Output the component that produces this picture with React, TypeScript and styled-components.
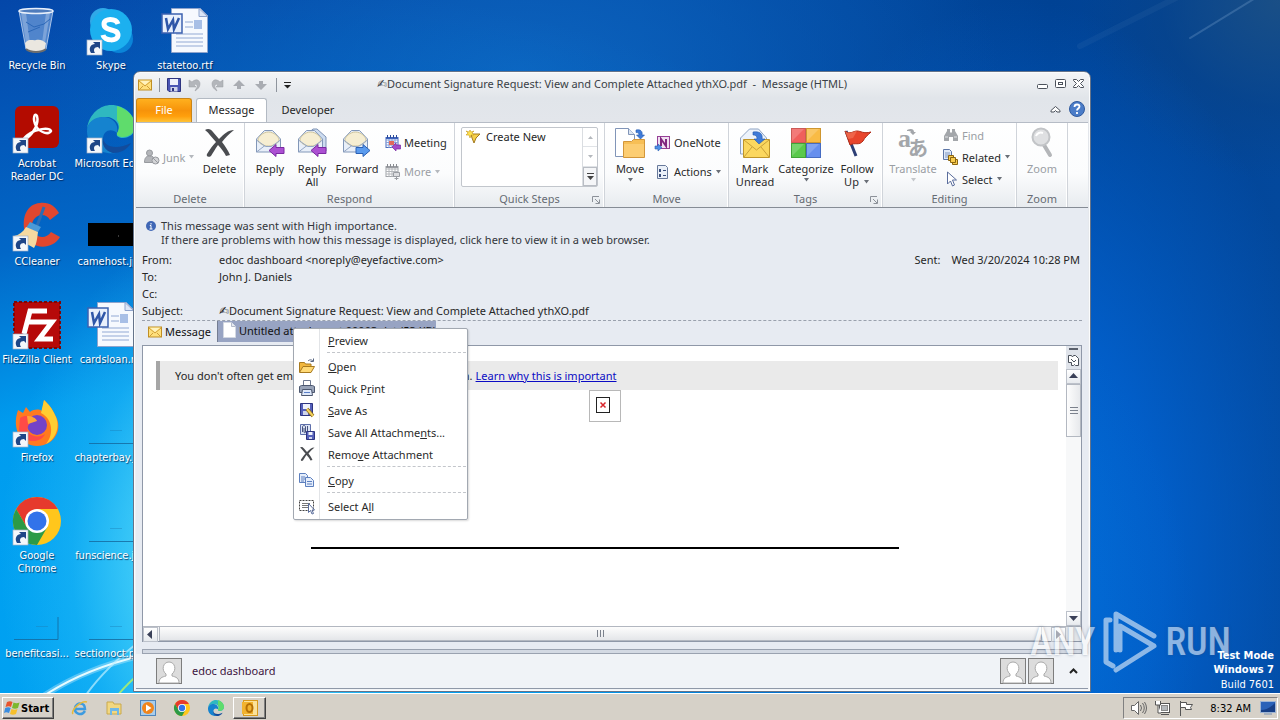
import React from "react";
import styled, { createGlobalStyle, css } from "styled-components";

const GlobalStyle = createGlobalStyle`
  * { box-sizing: border-box; }
  html, body { margin: 0; padding: 0; }
  body {
    font-family: "Noto Sans", "Open Sans", sans-serif;
    font-size: 11px;
    line-height: 13px;
    color: #262626;
    overflow: hidden;
  }
  button { font: inherit; color: inherit; border: 0; padding: 0; margin: 0; background: none; cursor: default; }
  a { cursor: pointer; }
  svg { display: block; flex: none; overflow: visible; }
  dl, dt, dd, p, h1, ul { margin: 0; padding: 0; font: inherit; }
`;

/* ---------- desktop ---------- */

const Screen = styled.div`
  min-height: 100vh;
  display: flex;
  flex-direction: column;
`;

const Desktop = styled.main`
  position: relative;
  flex: 1;
  overflow: hidden;
  background:
    radial-gradient(ellipse 240px 340px at 240px 560px, rgba(120, 235, 255, 0.95) 0%, rgba(90, 220, 250, 0.8) 35%, rgba(50, 195, 248, 0.35) 70%, rgba(20, 160, 240, 0) 100%),
    radial-gradient(ellipse 1000px 660px at 200px 640px, #00a6f4 0%, rgba(0, 160, 242, 0.95) 38%, rgba(0, 125, 220, 0.6) 62%, rgba(0, 90, 190, 0) 100%),
    radial-gradient(ellipse 480px 240px at 520px 70px, rgba(14, 104, 194, 0.8) 0%, rgba(8, 90, 180, 0.5) 60%, rgba(0, 70, 160, 0) 100%),
    radial-gradient(ellipse 320px 560px at 1020px 560px, #026cdc 0%, rgba(2, 98, 208, 0.85) 45%, rgba(0, 70, 160, 0) 100%),
    radial-gradient(ellipse 200px 180px at 1280px 0, #1a4f86 0%, rgba(10, 66, 132, 0.5) 60%, rgba(0, 60, 140, 0) 100%),
    linear-gradient(90deg, #0446a8 0%, #0450ac 50%, #004294 82%, #03489c 100%);
`;

const Scenery = styled.svg`
  position: absolute;
  inset: 0;
  width: 100%;
  height: 100%;
`;

const IconGrid = styled.ul`
  position: relative;
  display: grid;
  grid-template-rows: repeat(7, 98px);
  grid-auto-columns: 74px;
  grid-auto-flow: column;
  justify-content: start;
  list-style: none;
  padding-top: 7px;
`;

const DesktopItem = styled.li<{ $col: number }>`
  grid-column: ${(p) => p.$col};
  display: flex;
  flex-direction: column;
  align-items: center;
  text-align: center;
  gap: 4px;
  color: #fff;
  font-family: "DejaVu Sans Condensed", "DejaVu Sans", sans-serif;
  text-shadow: 1px 1px 1px rgba(0, 20, 60, 0.7);
  white-space: pre;
`;

const BuildNote = styled.div`
  position: absolute;
  right: 6px;
  bottom: 0;
  color: #fff;
  text-align: right;
  font-family: "DejaVu Sans Condensed", "DejaVu Sans", sans-serif;
  line-height: 14px;
  strong { display: block; }
  span { display: block; line-height: 16px; }
`;

const Watermark = styled.div`
  position: absolute;
  right: 49px;
  bottom: 19px;
  display: flex;
  align-items: center;
  gap: 7px;
  color: #fff;
  opacity: 0.55;
  font-family: "Roboto Condensed", "Liberation Sans Narrow", "Liberation Sans", sans-serif;
  font-size: 38px;
  font-weight: 500;
  line-height: 64px;
  text-shadow: 0 0 3px rgba(50, 70, 100, 0.8);
`;

/* ---------- window ---------- */

const MailWindow = styled.section`
  position: absolute;
  left: 133px;
  right: 189px;
  top: 71px;
  bottom: 1px;
  display: flex;
  flex-direction: column;
  border: 1px solid #66748a;
  border-radius: 7px 7px 0 0;
  padding: 0 2px 2px;
  background: linear-gradient(#f4f5f7 0, #e1e5ea 26px, #e3e6eb 50px, #f2f4f7 100%);
  box-shadow: inset 0 0 0 1px #fbfcfd;
`;

const TitleBar = styled.header`
  display: flex;
  align-items: center;
  height: 26px;
`;

const QuickAccess = styled.div`
  flex: 1;
  display: flex;
  align-items: center;
  gap: 6px;
  padding-left: 2px;
`;

const Title = styled.h1`
  white-space: pre;
  padding-bottom: 3px;
  color: #3a3f46;
`;

const Hand = styled.span`
  font-family: "DejaVu Sans", sans-serif;
  font-size: 12px;
  line-height: 1;
`;

const WindowButtons = styled.div`
  flex: 1;
  display: flex;
  justify-content: flex-end;
  gap: 4px;
  padding: 0 2px 3px 0;
`;

const TabRow = styled.nav`
  display: flex;
  align-items: stretch;
  height: 24px;
  gap: 4px;
`;

const tabBase = css`
  height: 24px;
  padding-bottom: 2px;
  border-radius: 3px 3px 0 0;
  text-align: center;
`;

const FileTab = styled.button`
  ${tabBase}
  width: 56px;
  color: #fff;
  border: 1px solid #c98518;
  border-bottom: 0;
  background: linear-gradient(#ffb01e, #f7930a 50%, #ff9f0c 75%, #ffc337);
`;

const Tab = styled.button<{ $active?: boolean }>`
  ${tabBase}
  width: ${(p) => (p.$active ? 71 : 74)}px;
  ${(p) => p.$active && css`
    background: #fff;
    border: 1px solid #b3bac3;
    border-bottom: 0;
  `}
`;

const TabTools = styled.div`
  margin-left: auto;
  display: flex;
  align-items: center;
  gap: 8px;
  padding: 0 3px 2px 0;
`;

const Ribbon = styled.div`
  display: flex;
  height: 86px;
  border-top: 1px solid #b6bcc6;
  border-bottom: 1px solid #868c95;
  background: linear-gradient(#fff, #fbfcfd 60%, #e8ebef);
`;

const Group = styled.section<{ $w: number }>`
  width: ${(p) => p.$w}px;
  display: flex;
  flex-direction: column;
  border-right: 1px solid #d0d4da;
  box-shadow: inset -1px 0 0 #fff;
`;

const GroupBody = styled.div<{ $pad?: number }>`
  height: 68px;
  display: flex;
  padding: 1px 0 0 ${(p) => p.$pad ?? 4}px;
`;

const GroupLabel = styled.div`
  position: relative;
  line-height: 15px;
  text-align: center;
  color: #666b73;
  svg { position: absolute; right: 4px; top: 5px; }
`;

const BigButton = styled.button<{ $w: number; $off?: boolean }>`
  width: ${(p) => p.$w}px;
  display: flex;
  flex-direction: column;
  align-items: center;
  justify-content: flex-start;
  gap: 3px;
  padding-top: 3px;
  color: ${(p) => (p.$off ? "#9a9ea4" : "#2b2b2b")};
  white-space: pre-line;
  text-align: center;
`;

const WithArrow = styled.span`
  display: inline-flex;
  align-items: center;
  gap: 4px;
`;

const SideColumn = styled.div<{ $gap?: number }>`
  height: 66px;
  display: flex;
  flex-direction: column;
  justify-content: center;
  gap: ${(p) => p.$gap ?? 0}px;
  padding-left: 4px;
`;

const SideButton = styled.button<{ $off?: boolean }>`
  display: flex;
  align-items: center;
  height: 22px;
  gap: 3px;
  color: ${(p) => (p.$off ? "#9a9ea4" : "#2b2b2b")};
  white-space: nowrap;
`;

const Gallery = styled.div`
  width: 137px;
  height: 60px;
  margin-top: 3px;
  display: flex;
  border: 1px solid #c2c6cc;
  border-radius: 2px;
  background: #fff;
`;

const GalleryItem = styled.button`
  flex: 1;
  display: flex;
  align-items: center;
  align-self: flex-start;
  height: 17px;
  gap: 5px;
  padding-left: 4px;
`;

const GalleryScroll = styled.div`
  width: 15px;
  display: grid;
  grid-template-rows: repeat(3, 1fr);
  border-left: 1px solid #dadde1;
  button { display: grid; place-items: center; border-bottom: 1px solid #e0e3e7; color: #b4b8bd; }
  button:last-child { color: #444; border: 1px solid #b9bdc4; background: #f5f6f8; }
`;

/* ---------- message ---------- */

const Message = styled.div`
  flex: 1;
  display: flex;
  flex-direction: column;
  padding: 11px 6px 0;
  min-height: 0;
  background: #e7ebf2;
`;

const InfoBar = styled.div`
  display: flex;
  gap: 5px;
  padding-left: 4px;
  line-height: 14px;
  color: #33363b;
  svg { margin-top: 2px; }
`;

const Fields = styled.dl`
  display: grid;
  grid-template-columns: 77px 1fr auto;
  grid-auto-rows: 17px;
  line-height: 17px;
  margin-top: 4px;
  padding: 0 2px 1px 0;
  border-bottom: 1px dashed #9aa1ad;
  dt { grid-column: 1; }
`;

const Sent = styled.dd`
  display: flex;
  gap: 11px;
`;

const Attachments = styled.div`
  display: flex;
  height: 21px;
  margin-bottom: 3px;
  color: #111;
`;

const MessageTab = styled.button`
  display: flex;
  align-items: center;
  gap: 3px;
  width: 75px;
  padding-left: 6px;
`;

const AttachmentTab = styled.div`
  position: relative;
  width: 219px;
  background: #98a4c3;
  border-left: 1px solid #747d92;
`;

const AttachmentName = styled.button`
  display: flex;
  align-items: center;
  gap: 3px;
  height: 18px;
  padding-left: 5px;
  white-space: nowrap;
`;

const Menu = styled.div`
  position: absolute;
  z-index: 5;
  left: 75px;
  top: 7px;
  width: 175px;
  padding: 0 1px 2px;
  border: 1px solid #a2a8b1;
  border-radius: 2px;
  background: linear-gradient(90deg, #fff 25px, #e2e4e7 25px, #e2e4e7 26px, #fff 26px);
  box-shadow: 1px 1px 2px rgba(0, 0, 0, 0.15);
`;

const MenuItem = styled.button`
  display: flex;
  align-items: center;
  width: 100%;
  height: 22px;
  padding-left: 4px;
  gap: 13px;
  white-space: nowrap;
  color: #2b2b2b;
`;

const IconSlot = styled.span`
  width: 16px;
  height: 16px;
`;

const MenuRule = styled.div`
  height: 2px;
  margin: 1px 0 1px 32px;
  border-top: 1px dashed #c3c6cb;
`;

const Reader = styled.div`
  flex: 1;
  min-height: 0;
  display: flex;
  flex-direction: column;
  border: 1px solid #8f98a8;
  background: #fff;
  margin-bottom: 7px;
`;

const ReaderRow = styled.div`
  flex: 1;
  min-height: 0;
  display: flex;
`;

const Page = styled.article`
  flex: 1;
  min-width: 0;
  display: flex;
  flex-direction: column;
  align-items: center;
  padding-top: 15px;
`;

const Notice = styled.p`
  align-self: stretch;
  display: flex;
  gap: 3px;
  height: 29px;
  line-height: 29px;
  margin: 0 8px 0 13px;
  padding-left: 15px;
  border-left: 4px solid #a6a6a6;
  background: #eaeaea;
  white-space: nowrap;
  a { color: #0b0bc4; }
`;

const Address = styled.span`
  padding-left: 8px;
`;

const BrokenImage = styled.div`
  width: 32px;
  height: 32px;
  padding: 6px;
  border: 1px solid #b8b8b8;
`;

const Rule = styled.hr`
  width: 588px;
  max-width: 100%;
  height: 2px;
  margin: 125px 0 0;
  border: 0;
  background: #000;
`;

const VScroll = styled.div`
  width: 15px;
  display: flex;
  flex-direction: column;
  background: #f7f8f9;
`;

const HScroll = styled.div`
  display: flex;
  height: 15px;
  border-top: 1px solid #b2b7c0;
  background: #f3f4f6;
`;

const ScrollButton = styled.button`
  width: 15px;
  height: 15px;
  display: grid;
  place-items: center;
  border: 1px solid #bcc1ca;
  background: linear-gradient(#fff, #e7eaee);
`;

const OptionsButton = styled.button`
  width: 15px;
  height: 17px;
  display: grid;
  place-items: center;
  background: #dfe3ea;
`;

const SplitHandle = styled.div`
  height: 6px;
  display: grid;
  place-items: center;
  background: #dfe3ea;
  &::after { content: ""; width: 9px; height: 2px; background: #5a606c; }
`;

const VThumb = styled.div`
  height: 53px;
  display: grid;
  place-items: center;
  border: 1px solid #b3b8c1;
  background: linear-gradient(90deg, #fdfdfd, #e7e9ec);
`;

const HThumb = styled.div`
  flex: 1;
  margin: 0 9px 0 1px;
  display: grid;
  place-items: center;
  border: 1px solid #b3b8c1;
  border-top: 0;
  background: linear-gradient(#fdfdfd, #e4e6e9);
`;

const Corner = styled.div`
  width: 15px;
  background: #e4e7eb;
`;

const Spacer = styled.div`
  flex: 1;
`;

const PeopleSplitter = styled.div`
  height: 5px;
  border: 1px solid #9aa2b0;
  background: #d3d9e3;
`;

const PeoplePane = styled.footer`
  display: flex;
  align-items: center;
  gap: 2px;
  height: 35px;
  padding: 0 10px 1px 20px;
  background: #f0f3f7;
  border-bottom: 1px solid #8f98a8;
  color: #3d1440;
`;

const PersonName = styled.span`
  padding-left: 8px;
  font-size: 11px;
`;

const PeopleToggle = styled.button`
  margin-left: 13px;
`;

/* ---------- taskbar ---------- */

const Taskbar = styled.footer`
  display: flex;
  align-items: center;
  height: 28px;
  padding: 2px 2px 1px;
  border-top: 1px solid #fff;
  background: #d6d1c8;
  box-shadow: 0 -1px 0 #d6d1c8;
  color: #000;
  font-family: "DejaVu Sans Condensed", "DejaVu Sans", sans-serif;
`;

const raised = css`
  border: 1px solid;
  border-color: #fff #404040 #404040 #fff;
  box-shadow: inset -1px -1px 0 #808080;
`;

const StartButton = styled.button`
  ${raised}
  display: flex;
  align-items: center;
  gap: 1px;
  width: 52px;
  height: 22px;
  padding-left: 1px;
  font-weight: bold;
`;

const TaskButton = styled.button<{ $open?: boolean }>`
  width: 33px;
  height: 22px;
  display: grid;
  place-items: center;
  ${(p) => p.$open && raised}
`;

const Launchers = styled.div`
  display: flex;
  gap: 1px;
  margin-left: 9px;
`;

const Tray = styled.div`
  margin-left: auto;
  display: flex;
  align-items: center;
  gap: 7px;
  height: 22px;
  padding: 0 1px 0 6px;
  border: 1px solid;
  border-color: #808080 #fff #fff #808080;
`;

const Clock = styled.time`
  padding: 0 2px 0 8px;
`;

/* ---------- small drawings ---------- */

const Down = ({ c = "#6a6f77" }: { c?: string }) => (
  <svg width="7" height="4" viewBox="0 0 7 4"><path d="M1 0h5L3.500 3.500z" fill={c} /></svg>
);

const Arrow = ({ dir }: { dir: "up" | "down" | "left" | "right" }) => {
  const d = { up: "M0 6L4.500 1 9 6z", down: "M0 2h9L4.500 7z", left: "M6 0v9L1 4.500z", right: "M2 0v9l5-4.500z" }[dir];
  return <svg width="9" height="9" viewBox="0 0 9 9"><path d={d} fill="#3a4058" /></svg>;
};

const Envelope = () => (
  <svg width="14" height="12" viewBox="0 0 14 12">
    <rect x=".5" y="1" width="13" height="10" fill="#ffe07c" stroke="#c08f24" />
    <path d="M1 2l6 5 6-5M1 11l4-4M13 11L9 7" fill="none" stroke="#d09e38" />
    <path d="M2 1.800h10L7 6z" fill="#fff3bf" />
  </svg>
);

const Floppy = () => (
  <svg width="14" height="14" viewBox="0 0 14 14">
    <path d="M.5.5h13v13H2L.5 12z" fill="#4b56b4" stroke="#2d3480" />
    <rect x="3" y="1" width="8" height="6" fill="#eef1fb" />
    <rect x="3.500" y="9" width="7" height="4.500" fill="#cfd4ea" />
    <rect x="5" y="10" width="2" height="3" fill="#2d3480" />
  </svg>
);

const Undo = ({ flip }: { flip?: boolean }) => (
  <svg width="16" height="14" viewBox="0 0 16 14">
    <g transform={flip ? "matrix(-1 0 0 1 16 0)" : undefined}>
      <path d="M5 4c4-4 8-2 8 2 0 3-2 5-5 7 1-3 3-4 2-6-1-1-2-1-3 0l2 2H2V2z" fill="#b3b6bb" stroke="#9a9da3" strokeWidth=".5" />
    </g>
  </svg>
);

const NavArrow = ({ down }: { down?: boolean }) => (
  <svg width="16" height="12" viewBox="0 0 16 12">
    <path d={down ? "M6 2h4v3h4l-6 6-6-6h4z" : "M6 10h4V7h4L8 1 2 7h4z"} fill="#a9acb2" />
  </svg>
);

const Separator = () => (
  <svg width="3" height="14" viewBox="0 0 3 14"><path d="M1.500 0v14" stroke="#8e949d" /></svg>
);

const CustomizeGlyph = () => (
  <svg width="7" height="8" viewBox="0 0 7 8"><path d="M0 1.500h7" stroke="#222" /><path d="M0 4h7L3.500 7.500z" fill="#222" /></svg>
);

const DeleteX = ({ size = 32 }: { size?: number }) => (
  <svg width={size} height={size} viewBox="0 0 32 32">
    <path d="M2 3c3-2 6-1 8 2l6 7c5-5 9-9 15-9-5 4-9 8-12 12 3 4 6 8 8 13l-4 1c-2-4-5-8-8-11-3 4-5 8-7 11-3 2-5 0-4-2 3-5 6-9 9-12C9 11 6 6 2 3z" fill="#4a4c50" />
  </svg>
);

const Junk = () => (
  <svg width="16" height="16" viewBox="0 0 16 16" fill="#b4b6ba" stroke="#96999e">
    <circle cx="5.500" cy="4" r="3" /><path d="M.5 13.500c0-5 2-6.500 5-6.500s5 1 5 4v2.500z" /><circle cx="11.500" cy="11.500" r="3.500" fill="#d3d4d7" /><path d="M9 9l5 5" />
  </svg>
);

const OpenEnvelope = ({ arrow, all }: { arrow: "reply" | "forward"; all?: boolean }) => (
  <svg width="32" height="32" viewBox="0 0 32 32">
    {all && <path d="M8 10l9-8h4l9 8v14H8z" fill="#cddcf0" stroke="#7f93b5" />}
    <path d="M2.500 12l8-8.500h8l8 8.500v13h-24z" fill="#e8eff9" stroke="#8297b8" />
    <path d="M4 13c0-3 5-8 10.500-8S25 10 25 13s-5 6-10.500 6S4 16 4 13z" fill="#f6eed2" stroke="#cfc59d" />
    <path d="M2.500 13l9 6.500h6l9-6.500M2.500 25l8.500-6.500" fill="none" stroke="#93a6c4" />
    {arrow === "reply"
      ? <path d="M15 23.500l7-6v3h8v6h-8v3z" fill="#ac50d2" stroke="#7a2aa2" />
      : <path d="M29 23.500l-7-6v3h-7v6h7v3z" fill="#5a9bee" stroke="#2a60b4" />}
  </svg>
);

const Calendar = ({ off }: { off?: boolean }) => (
  <svg width="16" height="16" viewBox="0 0 16 16">
    <rect x="1" y="2.500" width="12" height="10" fill="#fff" stroke={off ? "#a0a3a8" : "#4a6cc0"} />
    <path d="M1 5h12M1 7.500h12M1 10h12M4 3v10M7 3v10M10 3v10" stroke={off ? "#b4b7bb" : "#86a0da"} />
    <path d="M1 3h12" stroke={off ? "#9a9da2" : "#3d62bc"} strokeWidth="2" />
    <path d="M2.500 0v3M5.500 0v3M8.500 0v3M11.500 0v3" stroke={off ? "#888b90" : "#2c4a98"} />
    {off
      ? <path d="M8.500 8.500h6v4h-6zM11.500 13v3M9.500 14.500h4" fill="#dcdde0" stroke="#9a9da2" />
      : <><rect x="4" y="6" width="5" height="4" fill="#e0685c" /><path d="M7 12l4-4v2h4.500v4H11v2z" fill="#a24bc9" stroke="#7a2aa2" strokeWidth=".7" /></>}
  </svg>
);

const Spark = () => (
  <svg width="15" height="14" viewBox="0 0 15 14">
    <path d="M5 4h9l-4 4-2 5-2-5z" fill="#f6cf4a" stroke="#a37a1f" />
    <path d="M4 0l1 2 3-1-2 2 2 2-3 0-1 3-1-3-3 0 2-2-2-2 3 1z" fill="#ffe14d" stroke="#c79a1c" strokeWidth=".6" />
  </svg>
);

const MoveFolder = () => (
  <svg width="32" height="32" viewBox="0 0 32 32">
    <path d="M1.500 1.500h13l6 6v22h-19z" fill="#fff" stroke="#8195b8" /><path d="M14.500 1.500v6h6" fill="#dbe5f3" stroke="#8195b8" />
    <path d="M9.500 14.500h8l2-2h11v18h-21z" fill="#f7bf56" stroke="#d2963a" /><path d="M10 17h20v13H10z" fill="#fccd72" />
    <path d="M22 3c4-1 7 1 6 5h2.500l-4 4-4-4H25c0-2-1-2.500-3-2.500z" fill="#3f7bd9" stroke="#2459ab" strokeWidth=".6" />
  </svg>
);

const OneNote = () => (
  <svg width="16" height="16" viewBox="0 0 16 16">
    <rect x="2.500" y="1.500" width="12" height="12" fill="#f0dff0" stroke="#963f96" />
    <path d="M6 11V4l5 7V4" fill="none" stroke="#80277f" strokeWidth="2" />
    <path d="M0 11h3V9l4 3.500L3 16v-2H0z" fill="#4f8fe6" stroke="#2a60b4" strokeWidth=".6" />
  </svg>
);

const Actions = () => (
  <svg width="16" height="16" viewBox="0 0 16 16">
    <path d="M2.500 1.500h8l2 2v11h-10z" fill="#eaf0f8" stroke="#67799a" />
    <rect x="4" y="5" width="2" height="3" fill="#3a4f7c" /><rect x="4" y="10" width="2" height="3" fill="#3a4f7c" />
    <path d="M8 6.500h3M8 11.500h3" stroke="#3a4f7c" />
  </svg>
);

const MarkUnread = () => (
  <svg width="32" height="32" viewBox="0 0 32 32">
    <path d="M1.500 11l9-9h9l8 9v16h-26z" fill="#edf3fb" stroke="#8fa4c4" />
    <path d="M4.500 12.500h26v18h-26z" fill="#fbd75f" stroke="#bf952a" />
    <path d="M5 13l12.500 10L30 13M5 30l8-10M30 30l-8-10" fill="none" stroke="#c9a038" />
    <path d="M14 5c7-1 10 2 9 7h3l-6 5-5-5h3c0-3-1-4-4-4z" fill="#3f7bd9" stroke="#2459ab" strokeWidth=".6" />
  </svg>
);

const Categorize = () => (
  <svg width="32" height="32" viewBox="0 0 32 32">
    <rect x="1.500" y="1.500" width="14" height="14" fill="#f05f5c" stroke="#cc5a56" /><rect x="16.500" y="1.500" width="14" height="14" fill="#f9bb45" stroke="#cf962f" />
    <rect x="1.500" y="16.500" width="14" height="14" fill="#5ac94c" stroke="#42a338" /><rect x="16.500" y="16.500" width="14" height="14" fill="#668fee" stroke="#466cc2" />
    <path d="M2 2h12L2 14zM17 2h12L17 14zM2 17h12L2 29zM17 17h12L17 29z" fill="#fff" fillOpacity=".18" />
  </svg>
);

const Flag = () => (
  <svg width="32" height="32" viewBox="0 0 32 32">
    <path d="M5 4l10 25" stroke="#2d3f75" strokeWidth="3" />
    <path d="M4 4c5 4 8 0 12 0s6 3 14 1c-3 3-6 5-8 9-4 5-8 1-13 4z" fill="#e8452c" stroke="#b02c18" />
    <path d="M4 4c5 4 8 0 12 0l-4 7-5 1z" fill="#f47a5e" fillOpacity=".6" />
  </svg>
);

const Translate = () => (
  <svg width="32" height="32" viewBox="0 0 32 32" fill="#a3a6aa">
    <text x="1" y="20" fontFamily="Liberation Serif, serif" fontWeight="bold" fontSize="26">a</text>
    <text x="11" y="29" fontFamily="Noto Sans CJK JP, sans-serif" fontWeight="bold" fontSize="20">あ</text>
    <path d="M10 3c4-2 7-1 7 2h2l-3 3-3-3h1c0-1-2-1-4-1z" />
  </svg>
);

const Binoculars = () => (
  <svg width="16" height="16" viewBox="0 0 16 16" fill="#a3a6aa">
    <path d="M4 2h3v3l1 1 1-1V2h3v2l3 5v5h-5v-4H6v4H1V9l3-5z" /><path d="M2 10h3M11 10h3" stroke="#e3e4e6" />
  </svg>
);

const Related = () => (
  <svg width="16" height="16" viewBox="0 0 16 16">
    <path d="M.5.5h6l2 2v8h-8z" fill="#dfe9f8" stroke="#5d76a6" /><path d="M2 4h5M2 6h5M2 8h4" stroke="#7f96c0" />
    <path d="M5.500 6.500h5v5h-5z" fill="#f8cb4e" stroke="#8a6510" /><path d="M9.500 10.500h5v5h-5z" fill="#f8cb4e" stroke="#8a6510" /><path d="M7.500 8.500h5v5h-5z" fill="#f8cb4e" stroke="#8a6510" />
  </svg>
);

const Cursor = () => (
  <svg width="16" height="16" viewBox="0 0 16 16"><path d="M4.500 1v12l3-3 2 5 2-1-2-5h4z" fill="#fff" stroke="#5a6d9c" /></svg>
);

const Magnifier = () => (
  <svg width="32" height="32" viewBox="0 0 32 32">
    <path d="M18 18l6 10" stroke="#b4b6b9" strokeWidth="4" strokeLinecap="round" /><circle cx="15" cy="10" r="8.500" fill="#dfe0e2" stroke="#c2c4c7" strokeWidth="2" /><path d="M10 9c1-3 4-4 7-3" stroke="#fff" strokeWidth="2" fill="none" />
  </svg>
);

const Launcher = () => (
  <svg width="8" height="8" viewBox="0 0 8 8"><path d="M.5 6V.5H7M3 3l4 4M7.500 3.500v4h-4" fill="none" stroke="#8c9199" /></svg>
);

const Help = () => (
  <svg width="16" height="16" viewBox="0 0 16 16">
    <circle cx="8" cy="8" r="7.500" fill="#4a7cc8" stroke="#2f5a9f" />
    <path d="M5.500 6c0-3.500 5-3 5-.5C10.500 7.500 8 7.500 8 9.500M8 11v2" fill="none" stroke="#fff" strokeWidth="1.800" />
  </svg>
);

const Info = () => (
  <svg width="10" height="10" viewBox="0 0 10 10"><circle cx="5" cy="5" r="5" fill="#3f66b5" /><path d="M5 2v1.500M3.800 4.500H5V8M3.500 8h3" stroke="#fff" fill="none" /></svg>
);

const Sheet = () => (
  <svg width="13" height="16" viewBox="0 0 13 16"><path d="M.5.5h8l4 4v11H.5z" fill="#fff" stroke="#d3d8e2" /><path d="M8.500.5v4h4" fill="#e8ebf1" stroke="#b4bbca" /></svg>
);

const OpenFolder = () => (
  <svg width="16" height="16" viewBox="0 0 16 16">
    <path d="M.5 14V4.500h5l1 1.500H12v3" fill="#f2b73e" stroke="#a87a20" /><path d="M.5 14.500L4 8.500h11.500l-3.500 6z" fill="#ffd975" stroke="#a87a20" />
    <path d="M9 3c2-2 4-1 5 0M14.500.5v3h-3" fill="none" stroke="#556380" />
  </svg>
);

const Printer = () => (
  <svg width="16" height="16" viewBox="0 0 16 16">
    <path d="M4.500 6V.5h7V6" fill="#fff" stroke="#6d7890" /><path d="M.5 6.500l2-1h11l2 1v6H.5z" fill="#98a3b8" stroke="#4d5870" /><path d="M3.500 9.500h9l1 6h-11z" fill="#dfe9fa" stroke="#4d5870" /><path d="M5 12.500h6" stroke="#5b80c8" />
  </svg>
);

const SaveAs = () => (
  <svg width="16" height="16" viewBox="0 0 16 16">
    <path d="M1.500 1.500h12v12h-12z" fill="#5560bb" stroke="#2d3480" /><rect x="4" y="2" width="7" height="5" fill="#eef1fb" /><rect x="4" y="9" width="5" height="4" fill="#cfd4ea" />
    <path d="M8 7l6 7" stroke="#8e6d1b" strokeWidth="3.500" /><path d="M8 7l6 7" stroke="#f3d15c" strokeWidth="2" />
  </svg>
);

const SaveAll = () => (
  <svg width="16" height="16" viewBox="0 0 16 16">
    <path d="M1.500.5h10v10h-10z" fill="#dde5f6" stroke="#5e6fab" /><path d="M3.500 8V3c0-2 3-2 3 0v5c0 1-1.500 1-1.500 0V4M8.500 2v6" fill="none" stroke="#46527e" />
    <path d="M7.500 7.500h8v8h-8z" fill="#5560bb" stroke="#2d3480" /><rect x="9.500" y="8" width="4" height="3" fill="#eef1fb" /><rect x="10" y="13" width="3" height="2" fill="#cfd4ea" />
  </svg>
);

const Copy = () => (
  <svg width="16" height="16" viewBox="0 0 16 16" fill="#e4edfb" stroke="#5c7fbe">
    <path d="M.5 1.500h6l2 2v7h-8z" /><path d="M2 5h4M2 7h4M2 9h3" /><path d="M6.500 5.500h5l3 3v6h-8z" /><path d="M8 9.500h5M8 12h5" />
  </svg>
);

const SelectAll = () => (
  <svg width="16" height="16" viewBox="0 0 16 16">
    <path d="M.5 2.500h14v10H.5z" fill="none" stroke="#444" strokeDasharray="2 1" /><path d="M3 5.500h8M3 7.500h6M3 9.500h6" stroke="#777" />
    <path d="M9.500 5.500v9l2-2 1.500 3.500 1.500-.5-1.500-3.500h2.500z" fill="#fff" stroke="#5a6d9c" />
  </svg>
);

const Person = () => (
  <svg width="26" height="26" viewBox="0 0 26 26">
    <rect x=".5" y=".5" width="25" height="25" fill="#dcdcdc" stroke="#7d7d7d" />
    <path d="M3 25c0-5 3-6 7-7v-2c-5-4-3-12 3-12s8 8 3 12v2c4 1 7 2 7 7z" fill="#fff" stroke="#a9a9a9" />
  </svg>
);

/* ---------- desktop drawings ---------- */

const Shortcut = () => (
  <g>
    <rect x="0" y="33" width="15" height="15" fill="#f4f7fb" stroke="#a4b3c8" strokeWidth=".7" />
    <path d="M4 46c-3-5 0-9 4-9l-2-2h7v7l-2-2c-4 0-5 3-3 6z" fill="#1f4687" />
  </g>
);

const Art = ({ children, link }: { children?: React.ReactNode; link?: boolean }) => (
  <svg width="48" height="48" viewBox="0 0 48 48">{children}{link && <Shortcut />}</svg>
);

const RecycleBin = () => (
  <Art>
    <path d="M6 4l7 38c5 4 15 4 20 0l7-38z" fill="#8fb4e6" fillOpacity=".55" stroke="#a9c3e8" />
    <path d="M8 6l5 30h4L13 6zM37 6l-5 30h-3l4-30z" fill="#fff" fillOpacity=".25" />
    <path d="M12 36c4-5 8-2 11-3s7 0 10 3l-1 6c-5 4-15 4-19 0z" fill="#eae7e0" />
    <path d="M13 15l8 5 10-3 6-5M15 25l12-5" stroke="#2c68b8" fill="none" />
    <ellipse cx="23" cy="4" rx="17" ry="2.500" fill="#4f7cbc" stroke="#e8f0fb" strokeWidth="1.500" />
    <path d="M13 42c5 4 15 4 20 0" stroke="#6c6c6c" strokeWidth="2" fill="none" />
  </Art>
);

const Skype = () => (
  <Art link>
    <circle cx="16" cy="14" r="13" fill="#30a9e8" /><circle cx="32" cy="32" r="14" fill="#0a84d8" /><circle cx="24" cy="23" r="21" fill="#1cb0ef" />
    <path d="M31 17c-2-6-14-6-14 0 0 8 14 4 14 11 0 7-14 6-15 0" fill="none" stroke="#fff" strokeWidth="5" />
  </Art>
);

const WordDoc = () => (
  <Art>
    <path d="M10.500 1.500h29l7 7v37h-36z" fill="#f6f9fe" stroke="#8fa4cd" /><path d="M38 1.500v8h8.500z" fill="#dce6f7" stroke="#8fa4cd" />
    <path d="M24 15h8M24 20h8M15 27h27M15 31h27M15 35h27M15 39h27" stroke="#92a9d4" /><rect x="33" y="13" width="8" height="9" fill="#a8bfe6" />
    <rect x="1" y="7" width="20" height="19" fill="#e9f0fc" stroke="#3d62b0" strokeWidth="1.500" />
    <path d="M5 11l2 11 5-9 1 9 5-11" fill="none" stroke="#2f56a8" strokeWidth="2.500" />
  </Art>
);

const Acrobat = () => (
  <Art link>
    <rect x="2" y="1" width="44" height="42" rx="6" fill="#b30b00" />
    <path d="M14 33c7-5 12-15 10-22-2-4-5 2-1 10 4 7 13 9 15 5-2-4-15-2-22 3-6 4-7 8-2 4z" fill="none" stroke="#fff" strokeWidth="2.500" />
  </Art>
);

const EdgeShape = () => (
  <>
    <path d="M0 24C2 8 14 0 24 0c14 0 24 10 24 22 0 7-6 11-12 11-4 0-7-2-6-4 5-9-2-17-11-17C8 12 1 18 0 24z" fill="#2fb8c0" />
    <path d="M30 1c11 3 18 11 18 20 0 7-6 11-12 11-4 0-7-2-6-4 3-5 3-9 0-13z" fill="#5fdc6c" />
    <path d="M0 26c0-9 8-15 18-14 8 1 14 7 12 16-5-5-14-3-14 6 0 8 6 14 13 14C12 50 0 40 0 26z" fill="#1583cf" />
    <path d="M16 32c0 9 12 14 28 6-4 7-11 10-18 10-8-2-12-9-10-16z" fill="#124c9c" />
  </>
);

const CCleaner = () => (
  <Art link>
    <path d="M46 10L37 17c-5-9-18-5-18 6s13 15 19 6l9 5c-8 14-31 13-35-4C8 14 14 1 27 0c9-1 15 3 19 10z" fill="#e1472f" />
    <path d="M31 4l-7 19" stroke="#2c6cb2" strokeWidth="3" /><path d="M17 19l11 5-3 5-12-4z" fill="#4a9ad8" />
    <path d="M13 24l12 5c-1 7-1 11-4 16C13 40 6 39 1 33c5-1 9-4 12-9z" fill="#f5d9a0" />
  </Art>
);

const FileZilla = () => (
  <Art link>
    <rect x="1" y="1" width="46" height="46" fill="#b60909" stroke="#7e0505" strokeWidth="2" strokeDasharray="3 2" />
    <path d="M11 33l6-23h17M14 21h13M25 21h14L26 38h14" fill="none" stroke="#fff" strokeWidth="5" />
  </Art>
);

const Firefox = () => (
  <Art link>
    <path d="M5 11l5 3 3-6 4 5c4-3 9-3 12-1L31 1c5 5 8 8 11 15 9 14-1 31-18 31C9 47-2 31 5 11z" fill="#ff7a1f" />
    <path d="M31 1c5 5 8 8 11 15 6 11 1 24-9 29 8-9 7-25-5-31z" fill="#ffcd32" /><circle cx="24" cy="26" r="10" fill="#7442c8" />
    <path d="M7 19c6-4 13-1 17 3-5-1-7 2-9 5-4 8 9 14 17 8-4 10-22 10-26-4z" fill="#ff4b46" /><path d="M14 17c5 0 9 2 10 5l-9 3z" fill="#ffa436" />
  </Art>
);

const ChromeShape = () => (
  <>
    <circle cx="24" cy="24" r="24" fill="#ffc61c" />
    <path d="M3.200 12A24 24 0 0 1 44.800 12H24L13.600 30z" fill="#e63a2d" />
    <path d="M3.200 12A24 24 0 0 0 24 48l10.400-18H13.600z" fill="#2c9a47" />
    <circle cx="24" cy="24" r="12" fill="#fff" /><circle cx="24" cy="24" r="9.500" fill="#3173ea" />
  </>
);

const GhostPicture = ({ full }: { full?: boolean }) => (
  <Art><path d={full ? "M1 44.500h44V22" : "M2 44.500h46"} stroke="#14689c" strokeOpacity=".8" fill="none" /><path d="M23 31.500h12" stroke="#1b7cb4" strokeOpacity=".4" /></Art>
);

const BlackPicture = () => (
  <Art><rect x="1" y="20" width="47" height="23" fill="#000" /><path d="M31 33h1" stroke="#777" /></Art>
);

const desktopItems: [number, string, React.ReactNode][] = [
  [1, "Recycle Bin", <RecycleBin />],
  [1, "Acrobat\nReader DC", <Acrobat />],
  [1, "CCleaner", <CCleaner />],
  [1, "FileZilla Client", <FileZilla />],
  [1, "Firefox", <Firefox />],
  [1, "Google\nChrome", <Art link><ChromeShape /></Art>],
  [1, "benefitcasi...", <GhostPicture full />],
  [2, "Skype", <Skype />],
  [2, "Microsoft Edge", <Art link><EdgeShape /></Art>],
  [2, "camehost.jpg", <BlackPicture />],
  [2, "cardsloan.rtf", <WordDoc />],
  [2, "chapterbay.jpg", <GhostPicture />],
  [2, "funscience.jpg", <GhostPicture />],
  [2, "sectionoct.png", <GhostPicture />],
  [3, "statetoo.rtf", <WordDoc />],
];

const RibbonGroups = () => (
  <Ribbon>
    <Group $w={109}>
      <GroupBody>
        <SideColumn><SideButton disabled $off><Junk />Junk <Down c="#b4b8bd" /></SideButton></SideColumn>
        <BigButton $w={48}><DeleteX />Delete</BigButton>
      </GroupBody>
      <GroupLabel>Delete</GroupLabel>
    </Group>
    <Group $w={210}>
      <GroupBody>
        <BigButton $w={42}><OpenEnvelope arrow="reply" />Reply</BigButton>
        <BigButton $w={42}><OpenEnvelope arrow="reply" all />{"Reply\nAll"}</BigButton>
        <BigButton $w={48}><OpenEnvelope arrow="forward" />Forward</BigButton>
        <SideColumn $gap={7}>
          <SideButton><Calendar />Meeting</SideButton>
          <SideButton disabled $off><Calendar off />More <Down c="#b4b8bd" /></SideButton>
        </SideColumn>
      </GroupBody>
      <GroupLabel>Respond</GroupLabel>
    </Group>
    <Group $w={150}>
      <GroupBody $pad={6}>
        <Gallery>
          <GalleryItem><Spark />Create New</GalleryItem>
          <GalleryScroll>
            <button aria-label="Previous steps"><svg width="5" height="3"><path d="M0 3h5L2.500 0z" fill="currentColor" /></svg></button>
            <button aria-label="Next steps"><svg width="5" height="3"><path d="M0 0h5L2.500 3z" fill="currentColor" /></svg></button>
            <button aria-label="All steps"><svg width="7" height="7"><path d="M0 .5h7" stroke="currentColor" /><path d="M0 3h7L3.500 7z" fill="currentColor" /></svg></button>
          </GalleryScroll>
        </Gallery>
      </GroupBody>
      <GroupLabel>Quick Steps<Launcher /></GroupLabel>
    </Group>
    <Group $w={124}>
      <GroupBody>
        <BigButton $w={42}><MoveFolder />Move<Down /></BigButton>
        <SideColumn $gap={7}>
          <SideButton><OneNote />OneNote</SideButton>
          <SideButton><Actions />Actions <Down /></SideButton>
        </SideColumn>
      </GroupBody>
      <GroupLabel>Move</GroupLabel>
    </Group>
    <Group $w={154}>
      <GroupBody>
        <BigButton $w={44}><MarkUnread />{"Mark\nUnread"}</BigButton>
        <BigButton $w={58}><Categorize />Categorize<Down /></BigButton>
        <BigButton $w={44}><Flag /><span>Follow<br /><WithArrow>Up<Down /></WithArrow></span></BigButton>
      </GroupBody>
      <GroupLabel>Tags<Launcher /></GroupLabel>
    </Group>
    <Group $w={134}>
      <GroupBody>
        <BigButton $w={52} $off disabled><Translate />Translate<Down c="#c4c7cb" /></BigButton>
        <SideColumn>
          <SideButton disabled $off><Binoculars />Find</SideButton>
          <SideButton><Related />Related <Down /></SideButton>
          <SideButton><Cursor />Select <Down /></SideButton>
        </SideColumn>
      </GroupBody>
      <GroupLabel>Editing</GroupLabel>
    </Group>
    <Group $w={51}>
      <GroupBody $pad={0}><BigButton $w={50} $off disabled><Magnifier />Zoom</BigButton></GroupBody>
      <GroupLabel>Zoom</GroupLabel>
    </Group>
  </Ribbon>
);

const AttachmentMenu = () => (
  <Menu role="menu">
    <MenuItem role="menuitem"><IconSlot /><span><u>P</u>review</span></MenuItem>
    <MenuRule />
    <MenuItem role="menuitem"><OpenFolder /><span><u>O</u>pen</span></MenuItem>
    <MenuItem role="menuitem"><Printer /><span>Quick P<u>r</u>int</span></MenuItem>
    <MenuItem role="menuitem"><SaveAs /><span><u>S</u>ave As</span></MenuItem>
    <MenuItem role="menuitem"><SaveAll /><span>Save All Attachme<u>n</u>ts...</span></MenuItem>
    <MenuItem role="menuitem"><DeleteX size={16} /><span>Remo<u>v</u>e Attachment</span></MenuItem>
    <MenuRule />
    <MenuItem role="menuitem"><Copy /><span><u>C</u>opy</span></MenuItem>
    <MenuRule />
    <MenuItem role="menuitem"><SelectAll /><span>Select A<u>l</u>l</span></MenuItem>
  </Menu>
);

const OutlookMessage = () => (
  <MailWindow>
    <TitleBar>
      <QuickAccess>
        <Envelope /><Separator />
        <button aria-label="Save"><Floppy /></button>
        <button aria-label="Undo"><Undo /></button>
        <button aria-label="Redo"><Undo flip /></button>
        <button aria-label="Previous item"><NavArrow /></button>
        <button aria-label="Next item"><NavArrow down /></button>
        <Separator />
        <button aria-label="Customize"><CustomizeGlyph /></button>
      </QuickAccess>
      <Title><Hand>{"✍\uFE0E"}</Hand>Document Signature Request: View and Complete Attached ythXO.pdf  -  Message (HTML)</Title>
      <WindowButtons>
        <button aria-label="Minimize"><svg width="14" height="12"><rect x="1.500" y="6.500" width="10" height="4" rx="1" fill="#fff" stroke="#4b515b" /></svg></button>
        <button aria-label="Restore"><svg width="14" height="12"><rect x="1.500" y="1.500" width="10" height="8" rx="1" fill="#fff" stroke="#4b515b" /><rect x="4.500" y="4.500" width="4" height="2" fill="#fff" stroke="#4b515b" /></svg></button>
        <button aria-label="Close"><svg width="14" height="12"><path d="M1.500 1.500h3l2 2 2-2h3v1l-3 3 3 3v1h-3l-2-2-2 2h-3v-1l3-3-3-3z" fill="#fff" stroke="#4b515b" /></svg></button>
      </WindowButtons>
    </TitleBar>
    <TabRow>
      <FileTab>File</FileTab>
      <Tab $active>Message</Tab>
      <Tab>Developer</Tab>
      <TabTools>
        <button aria-label="Collapse ribbon"><svg width="11" height="8"><path d="M1 5.500l4.500-4 4.500 4v1.500H7L5.500 5.500 4 7H1z" fill="#fff" stroke="#4b515b" /></svg></button>
        <button aria-label="Help"><Help /></button>
      </TabTools>
    </TabRow>
    <RibbonGroups />
    <Message>
      <InfoBar>
        <Info />
        <div>
          <p>This message was sent with High importance.</p>
          <p>If there are problems with how this message is displayed, click here to view it in a web browser.</p>
        </div>
      </InfoBar>
      <Fields>
        <dt>From:</dt><dd>edoc dashboard &lt;noreply@eyefactive.com&gt;</dd>
        <Sent><span>Sent:</span><span>Wed 3/20/2024 10:28 PM</span></Sent>
        <dt>To:</dt><dd>John J. Daniels</dd>
        <dt>Cc:</dt><dd />
        <dt>Subject:</dt><dd><Hand>{"✍\uFE0E"}</Hand>Document Signature Request: View and Complete Attached ythXO.pdf</dd>
      </Fields>
      <Attachments>
        <MessageTab><Envelope />Message</MessageTab>
        <AttachmentTab>
          <AttachmentName><Sheet />Untitled attachment 00003.dat (53 KB)</AttachmentName>
          <AttachmentMenu />
        </AttachmentTab>
      </Attachments>
      <Reader>
        <ReaderRow>
          <Page>
            <Notice>
              <span>You don't often get email from</span>
              <Address>noreply@eyefactive.com.</Address>
              <a href="#learn">Learn why this is important</a>
            </Notice>
            <BrokenImage>
              <svg width="14" height="16" viewBox="0 0 14 16"><rect x=".5" y=".5" width="13" height="15" fill="#fff" stroke="#222" /><path d="M4.500 5.500l5 5M9.500 5.500l-5 5" stroke="#d8262c" strokeWidth="1.500" /></svg>
            </BrokenImage>
            <Rule />
          </Page>
          <VScroll>
            <SplitHandle />
            <OptionsButton aria-label="Select browse object"><svg width="13" height="13"><path d="M1.500 1.500h3l1 1.500 1-1.500h2l3 3v7h-3l-1-1-1 1h-2v-3h-3z" fill="#fff" stroke="#4b515b" /><path d="M4 5l3 3 2-2" fill="none" stroke="#4b515b" /></svg></OptionsButton>
            <ScrollButton aria-label="Scroll up"><Arrow dir="up" /></ScrollButton>
            <VThumb><svg width="8" height="8"><path d="M0 .5h8M0 3.500h8M0 6.500h8" stroke="#7b818c" /></svg></VThumb>
            <Spacer />
            <ScrollButton aria-label="Scroll down"><Arrow dir="down" /></ScrollButton>
          </VScroll>
        </ReaderRow>
        <HScroll>
          <ScrollButton aria-label="Scroll left"><Arrow dir="left" /></ScrollButton>
          <HThumb><svg width="8" height="7"><path d="M.5 0v7M3.500 0v7M6.500 0v7" stroke="#7b818c" /></svg></HThumb>
          <ScrollButton aria-label="Scroll right"><Arrow dir="right" /></ScrollButton>
          <Corner />
        </HScroll>
      </Reader>
      <PeopleSplitter />
    </Message>
    <PeoplePane>
      <Person /><PersonName>edoc dashboard</PersonName>
      <Spacer />
      <Person /><Person />
      <PeopleToggle aria-label="Expand people pane"><svg width="9" height="6"><path d="M1 5l3.500-3.500L8 5" fill="none" stroke="#222" strokeWidth="2" /></svg></PeopleToggle>
    </PeoplePane>
  </MailWindow>
);

const WindowsFlag = () => (
  <svg width="16" height="16" viewBox="0 0 16 16">
    <path d="M3 2c2-1 4-1 5.500 0L7 7C5.500 6 4 6 1.500 7z" fill="#e8542c" /><path d="M9.500 2.500c2 1 4 1 6 0L14 8c-2 1-4 1-6 0z" fill="#7cb82f" />
    <path d="M1.200 8c2-1 4-1 5.500 0L5 13c-2-1-3.500-1-5 0z" fill="#3a8de0" /><path d="M7.500 9c2 1 4 1 6 0L12 14c-2 1-4 1-6 0z" fill="#f7c02c" />
  </svg>
);

export default function App() {
  return (
    <Screen>
      <GlobalStyle />
      <Desktop>
        <Scenery viewBox="0 0 1280 692" preserveAspectRatio="none">
          <g fill="none" strokeLinecap="round">
            <path d="M45 694Q85 668 140 655" stroke="#fff" strokeOpacity=".3" strokeWidth="6" />
            <path d="M45 694Q85 668 140 655" stroke="#e6fbff" strokeWidth="2" />
            <path d="M86 694Q104 668 140 640" stroke="#bdf0ff" strokeOpacity=".7" strokeWidth="2" />
            <path d="M118 694Q126 684 140 672" stroke="#9be87c" strokeWidth="2" />
            <path d="M1190 38L1262 -6" stroke="#7fa6d0" strokeOpacity=".3" strokeWidth="2" />
            <path d="M1080 46L1180 -4" stroke="#7fa6d0" strokeOpacity=".08" strokeWidth="6" />
          </g>
        </Scenery>
        <IconGrid>
          {desktopItems.map(([col, name, art]) => (
            <DesktopItem key={name} $col={col}>{art}<span>{name}</span></DesktopItem>
          ))}
        </IconGrid>
        <OutlookMessage />
        <Watermark>
          <span>ANY</span>
          <svg width="56" height="64" viewBox="0 0 56 64" fill="none" stroke="#fff" strokeWidth="5" strokeLinejoin="round" strokeLinecap="round">
            <path d="M8 10H4v42l7 4M14 40V4l38 22M14 60l38-24-34-20v24" />
          </svg>
          <span>RUN</span>
        </Watermark>
        <BuildNote><strong>Test Mode</strong><strong>Windows 7</strong><span>Build 7601</span></BuildNote>
      </Desktop>
      <Taskbar>
        <StartButton><WindowsFlag />Start</StartButton>
        <Launchers>
          <TaskButton aria-label="Internet Explorer">
            <svg width="18" height="18" viewBox="0 0 18 18" fill="none"><path d="M14 12c-4 6-11 2-10-3 1-6 10-6 10 1H5" stroke="#3d9be0" strokeWidth="2.500" /><path d="M2 15C-1 12 10 1 16 3" stroke="#e6b93a" strokeWidth="1.500" /></svg>
          </TaskButton>
          <TaskButton aria-label="Explorer">
            <svg width="18" height="18" viewBox="0 0 18 18"><path d="M2 3h6l1 2h7v10H2z" fill="#f2d780" stroke="#c9a94c" /><path d="M5 16V9h9v7h-2v-4H7v4z" fill="#6fb8e8" /></svg>
          </TaskButton>
          <TaskButton aria-label="Media Player">
            <svg width="18" height="18" viewBox="0 0 18 18"><rect x="1.500" y="1.500" width="15" height="15" fill="#a8cdec" stroke="#4f86bc" /><circle cx="9" cy="9" r="6" fill="#f0851c" /><path d="M7 5.500v7l5.500-3.500z" fill="#fff" /></svg>
          </TaskButton>
          <TaskButton aria-label="Chrome"><svg width="16" height="16" viewBox="0 0 48 48"><ChromeShape /></svg></TaskButton>
          <TaskButton aria-label="Edge"><svg width="16" height="16" viewBox="0 0 48 48"><EdgeShape /></svg></TaskButton>
          <TaskButton $open aria-label="Outlook">
            <svg width="18" height="18" viewBox="0 0 18 18"><rect x="2.500" y="1.500" width="14" height="15" fill="#fbe29a" stroke="#d99a1c" /><rect x="1" y="3" width="11" height="12" fill="#f2b32f" /><ellipse cx="8.500" cy="9" rx="3" ry="4" fill="none" stroke="#b56f05" strokeWidth="2" /></svg>
          </TaskButton>
        </Launchers>
        <Tray>
          <svg width="17" height="16" viewBox="0 0 17 16" fill="none" stroke="#666"><path d="M1.500 5.500h3l4-4v13l-4-4h-3z" fill="#fff" /><path d="M10.500 5q2 3 0 6M12.500 3q3.500 5 0 10M14.500 2q4 6 0 12" /></svg>
          <svg width="17" height="16" viewBox="0 0 17 16" fill="none" stroke="#555"><rect x="5.500" y="3.500" width="10" height="9" fill="#fff" /><rect x="7.500" y="5.500" width="6" height="5" fill="#b4b8bc" stroke="#888" /><path d="M7 14.500h8" /><path d="M1.500 1v4h5V1M4 5v8h3" fill="#fff" /></svg>
          <svg width="17" height="16" viewBox="0 0 17 16" stroke="#555"><path d="M2.500 1v15" /><path d="M2.500 2.500h6v2h6l-2 3 1 2h-6v-2h-5z" fill="#fff" /></svg>
          <Clock>8:32 AM</Clock>
          <svg width="16" height="14" viewBox="0 0 16 14"><rect x=".5" y=".5" width="15" height="11" fill="#2a62b8" stroke="#9db4d4" /><path d="M1 9c5 0 10-3 14-7v9H1z" fill="#173f86" /><path d="M4 13h8" stroke="#7790b4" /></svg>
        </Tray>
      </Taskbar>
    </Screen>
  );
}
